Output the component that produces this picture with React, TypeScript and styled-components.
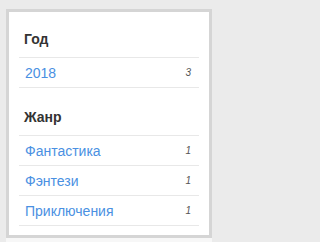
import React from "react";
import styled, { createGlobalStyle } from "styled-components";

const Global = createGlobalStyle`
  html, body { margin: 0; padding: 0; background: #ebebeb; }
  body { font-family: "Liberation Sans", Arial, sans-serif; }
`;

const Page = styled.div`
  padding: 9px 8px 0 6px;
`;

const Card = styled.div`
  width: 206px;
  background: #fff;
  border: 3px solid #d5d5d5;
  padding: 0 10px 9px;
  box-sizing: border-box;
`;

const Section = styled.section<{ $first?: boolean }>`
  padding-top: ${(p) => (p.$first ? "17px" : "19px")};
`;

const Title = styled.h3`
  margin: 0;
  padding: 0 5px 8px;
  font-size: 14px;
  line-height: 20px;
  font-weight: bold;
  color: #333;
  border-bottom: 1px solid #e8e8e8;
`;

const List = styled.ul`
  list-style: none;
  margin: 0;
  padding: 0;
`;

const Row = styled.li`
  display: flex;
  align-items: center;
  justify-content: space-between;
  height: 29px;
  padding: 0 8px 0 6px;
  border-bottom: 1px solid #e8e8e8;
`;

const Link = styled.a`
  font-size: 14px;
  color: #4a90e2;
  text-decoration: none;
`;

const Count = styled.span`
  font-size: 10px;
  font-style: italic;
  color: #555;
`;

const Next = styled.div`
  width: 206px;
  height: 8px;
  background: #f7f7f7;
`;

const data = [
  { title: "Год", items: [{ name: "2018", count: 3 }] },
  {
    title: "Жанр",
    items: [
      { name: "Фантастика", count: 1 },
      { name: "Фэнтези", count: 1 },
      { name: "Приключения", count: 1 },
    ],
  },
];

export default function App() {
  return (
    <>
      <Global />
      <Page>
        <Card>
          {data.map((s, i) => (
            <Section key={s.title} $first={i === 0}>
              <Title>{s.title}</Title>
              <List>
                {s.items.map((it) => (
                  <Row key={it.name}>
                    <Link href="#">{it.name}</Link>
                    <Count>{it.count}</Count>
                  </Row>
                ))}
              </List>
            </Section>
          ))}
        </Card>
        <Next />
      </Page>
    </>
  );
}
